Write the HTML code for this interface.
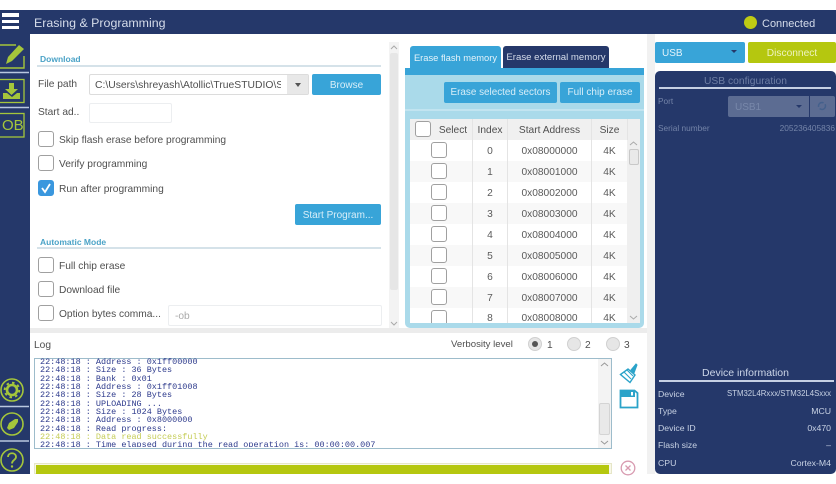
<!DOCTYPE html>
<html><head><meta charset="utf-8"><style>
html,body{margin:0;padding:0;background:#fff}
#r{position:relative;width:836px;height:484px;overflow:hidden;background:#fff;font-family:"Liberation Sans",sans-serif;color:#4f4f4f;font-size:10.2px}
#r div{position:absolute;box-sizing:border-box}
.t{white-space:nowrap;line-height:16px;height:16px;margin-top:1px}
.l{margin-top:2px}
.b{background:#38a4d8;color:#d8eef8;border-radius:2px;text-align:center;font-size:10px;margin-top:0}
.c{width:16px;height:16px;background:#fff;border:1px solid #a0a0a0;border-radius:3px}
.inp{background:#fff;border:1px solid #eceef0;border-radius:2px}
.hd{color:#4f4f4f;text-align:center;top:121px;font-size:10.2px}
.row{left:410px;width:217px;height:21px}
.cell{text-align:center;font-size:10.2px;color:#5a5a5a}
.d{color:#7484a8;font-size:8.3px;margin-top:0}
.w{color:#c8d2e4;font-size:8.7px;margin-top:0}
#log{left:40px;top:358px;font-family:"Liberation Mono",monospace;font-size:8.47px;line-height:8.33px;color:#2d3a8c;white-space:pre;height:89px;overflow:hidden;width:550px}
</style></head><body><div id="r">
<div style="left:0;top:10px;width:836px;height:24px;background:#25386a"></div>
<div style="left:0;top:10px;width:30px;height:464px;background:#25386a"></div>
<div style="left:2px;top:13px;width:17px;height:3.5px;background:#fff"></div>
<div style="left:2px;top:19.5px;width:17px;height:3.5px;background:#fff"></div>
<div style="left:2px;top:25.5px;width:17px;height:3.5px;background:#fff"></div>
<div class="t" style="left:34px;top:14px;font-size:12.4px;color:#d5dcea">Erasing &amp; Programming</div>
<div style="left:744px;top:16px;width:13px;height:13px;border-radius:50%;background:#bfcb14"></div>
<div class="t" style="left:762px;top:15px;font-size:11px;color:#d5dcea">Connected</div>

<svg style="position:absolute;left:0;top:40px" width="30" height="100" viewBox="0 0 30 100" fill="none">
<path d="M0 5H16M24 16V28H0" stroke="#a5c63b" stroke-width="1.4"/>
<path d="M6 24l2-7L19 5l5 4L12 21z" fill="#a5c63b"/>
<path d="M0 32.500H29M0 67.500H29" stroke="#b9c8e0" stroke-width="1.500"/>
<rect x="-2" y="39.500" width="26" height="23" stroke="#a5c63b" stroke-width="1.300"/>
<path d="M9 43h5v6h4l-6.500 6-6.500-6h4z" fill="#a5c63b"/>
<path d="M3 53h4l5 4 5-4h3v6H3z" fill="#a5c63b"/>
<rect x="-2" y="73.500" width="26" height="23.500" stroke="#a5c63b" stroke-width="1.300"/>
</svg>
<div class="t" style="left:2px;top:117px;font-size:15px;color:#a5c63b">OB</div>
<svg style="position:absolute;left:0;top:374px" width="30" height="100" viewBox="0 0 30 100" fill="none" stroke="#a5c63b">
<circle cx="12" cy="16" r="11" stroke-width="1.600"/>
<circle cx="12" cy="16" r="5" stroke-width="2.600"/>
<circle cx="12" cy="16" r="7.300" stroke-width="2" stroke-dasharray="2.500 3.200"/>
<path d="M0 32.500H29M0 67H29" stroke="#b9c8e0" stroke-width="1.500"/>
<circle cx="12" cy="50" r="11" stroke-width="1.600"/>
<path d="M7 54l2-5 6-4 3 0 0 3-4 6-5 2z" fill="#a5c63b" stroke="none"/>
<circle cx="12" cy="86" r="11" stroke-width="1.600"/>
<path d="M8 83c0-5 8-5 8 0 0 3-4 3-4 6.500" stroke-width="1.800"/>
<circle cx="12" cy="92.500" r="1.200" fill="#a5c63b" stroke="none"/>
</svg>

<div class="t" style="left:40px;top:50px;font-size:8.5px;font-weight:bold;color:#4ba3c7">Download</div>
<div style="left:37px;top:65px;width:344px;height:2px;background:#d5e2e9"></div>
<div class="t l" style="left:38px;top:75px">File path</div>
<div style="left:89px;top:74px;width:220px;height:21px;background:#fff;border:1px solid #dcdcdc;border-radius:2px"></div>
<div style="left:287px;top:75px;width:21px;height:19px;background:#e8e8e8"></div>
<div style="left:295px;top:83px;width:0;height:0;border-left:3.500px solid transparent;border-right:3.500px solid transparent;border-top:4px solid #555"></div>
<div class="t l" style="left:95px;top:76px;width:186px;overflow:hidden;font-size:10.35px">C:\Users\shreyash\Atollic\TrueSTUDIO\S</div>
<div class="b t" style="left:312px;top:74px;width:69px;height:21px;line-height:23px">Browse</div>
<div class="t l" style="left:38px;top:103px">Start ad..</div>
<div class="inp" style="left:89px;top:103px;width:83px;height:20px"></div>
<div class="c" style="left:38px;top:131px"></div><div class="t l" style="left:59px;top:131px">Skip flash erase before programming</div>
<div class="c" style="left:38px;top:155px"></div><div class="t l" style="left:59px;top:155px">Verify programming</div>
<div class="c" style="left:38px;top:180px;background:#3a97de;border-color:#3a97de"></div>
<svg style="position:absolute;left:38px;top:180px" width="16" height="16" fill="none"><path d="M4 8l3 4 5-8" stroke="#fff" stroke-width="1.800"/></svg>
<div class="t l" style="left:59px;top:180px">Run after programming</div>
<div class="b t" style="left:295px;top:204px;width:86px;height:21px;line-height:23px">Start Program...</div>
<div class="t" style="left:40px;top:233px;font-size:8.5px;font-weight:bold;color:#4ba3c7">Automatic Mode</div>
<div style="left:37px;top:247px;width:344px;height:2px;background:#d5e2e9"></div>
<div class="c" style="left:38px;top:257px"></div><div class="t l" style="left:59px;top:257px">Full chip erase</div>
<div class="c" style="left:38px;top:281px"></div><div class="t l" style="left:59px;top:281px">Download file</div>
<div class="c" style="left:38px;top:305px"></div><div class="t l" style="left:59px;top:305px">Option bytes comma...</div>
<div class="inp" style="left:168px;top:305px;width:214px;height:21px"></div>
<div class="t" style="left:175px;top:308px;color:#aaa">-ob</div>

<div style="left:389px;top:42px;width:10px;height:286px;background:#f3f3f3"></div>
<div style="left:390px;top:53px;width:8px;height:237px;background:#e6e6e6;border-radius:2px"></div>
<svg style="position:absolute;left:389px;top:42px" width="10" height="286" fill="none" stroke="#aaa"><path d="M2 7l3-3 3 3M2 280l3 3 3-3"/></svg>

<div style="left:30px;top:328px;width:617px;height:5px;background:#ececec"></div>
<div style="left:647px;top:34px;width:8px;height:440px;background:#f1f1f1"></div>

<div style="left:410px;top:46px;width:91px;height:24px;background:#38a4d8;border-radius:3px 3px 0 0"></div>
<div class="t" style="left:410px;top:49px;width:91px;text-align:center;color:#e4f3fa;font-size:9.35px">Erase flash memory</div>
<div style="left:503px;top:46px;width:106px;height:23px;background:#25386a;border-radius:3px 3px 0 0"></div>
<div class="t" style="left:503px;top:49px;width:106px;text-align:center;color:#d5dcea;font-size:9.6px">Erase external memory</div>
<div style="left:405px;top:68px;width:239px;height:260px;background:#aadaea;border-radius:0 0 5px 5px"></div>
<div style="left:405px;top:68px;width:239px;height:7px;background:#38a4d8"></div>
<div style="left:405px;top:109px;width:239px;height:2px;background:#c2e4f0"></div>
<div class="b t" style="left:444px;top:82px;width:113px;height:21px;line-height:22px;font-size:9.9px">Erase selected sectors</div>
<div class="b t" style="left:560px;top:82px;width:80px;height:21px;line-height:22px">Full chip erase</div>

<div style="left:410px;top:119px;width:217px;height:204px;background:#fff"></div>
<div style="left:410px;top:119px;width:217px;height:21px;background:#f0f0f0"></div>
<div style="left:627px;top:119px;width:13px;height:204px;background:#efefef"></div>
<div style="left:629px;top:149px;width:10px;height:16px;background:#e9e9e9;border:1px solid #c8c8c8;border-radius:2px"></div>
<svg style="position:absolute;left:627px;top:140px" width="13" height="183" fill="none" stroke="#aaa"><path d="M3 5l3.500-3 3.500 3M3 176l3.500 3 3.500-3"/></svg>
<div class="row" style="top:161px;background:#f8f8f8"></div>
<div class="row" style="top:203px;background:#f8f8f8"></div>
<div class="row" style="top:245px;background:#f8f8f8"></div>
<div class="row" style="top:287px;background:#f8f8f8"></div>
<div style="left:472px;top:119px;width:1px;height:204px;background:#e4e4e4"></div>
<div style="left:507px;top:119px;width:1px;height:204px;background:#e4e4e4"></div>
<div style="left:591px;top:119px;width:1px;height:204px;background:#e4e4e4"></div>
<div style="left:627px;top:119px;width:1px;height:21px;background:#e4e4e4"></div>
<div class="c" style="left:415px;top:121px"></div>
<div class="t l hd" style="left:433px;width:40px">Select</div>
<div class="t l hd" style="left:473px;width:34px">Index</div>
<div class="t l hd" style="left:508px;width:83px">Start Address</div>
<div class="t l hd" style="left:592px;width:35px">Size</div>

<div class="c" style="left:431px;top:142px"></div><div class="t l cell" style="left:473px;top:142px;width:34px">0</div><div class="t l cell" style="left:508px;top:142px;width:83px">0x08000000</div><div class="t l cell" style="left:592px;top:142px;width:35px">4K</div>
<div class="c" style="left:431px;top:163px"></div><div class="t l cell" style="left:473px;top:163px;width:34px">1</div><div class="t l cell" style="left:508px;top:163px;width:83px">0x08001000</div><div class="t l cell" style="left:592px;top:163px;width:35px">4K</div>
<div class="c" style="left:431px;top:184px"></div><div class="t l cell" style="left:473px;top:184px;width:34px">2</div><div class="t l cell" style="left:508px;top:184px;width:83px">0x08002000</div><div class="t l cell" style="left:592px;top:184px;width:35px">4K</div>
<div class="c" style="left:431px;top:205px"></div><div class="t l cell" style="left:473px;top:205px;width:34px">3</div><div class="t l cell" style="left:508px;top:205px;width:83px">0x08003000</div><div class="t l cell" style="left:592px;top:205px;width:35px">4K</div>
<div class="c" style="left:431px;top:226px"></div><div class="t l cell" style="left:473px;top:226px;width:34px">4</div><div class="t l cell" style="left:508px;top:226px;width:83px">0x08004000</div><div class="t l cell" style="left:592px;top:226px;width:35px">4K</div>
<div class="c" style="left:431px;top:247px"></div><div class="t l cell" style="left:473px;top:247px;width:34px">5</div><div class="t l cell" style="left:508px;top:247px;width:83px">0x08005000</div><div class="t l cell" style="left:592px;top:247px;width:35px">4K</div>
<div class="c" style="left:431px;top:268px"></div><div class="t l cell" style="left:473px;top:268px;width:34px">6</div><div class="t l cell" style="left:508px;top:268px;width:83px">0x08006000</div><div class="t l cell" style="left:592px;top:268px;width:35px">4K</div>
<div class="c" style="left:431px;top:289px"></div><div class="t l cell" style="left:473px;top:289px;width:34px">7</div><div class="t l cell" style="left:508px;top:289px;width:83px">0x08007000</div><div class="t l cell" style="left:592px;top:289px;width:35px">4K</div>
<div class="c" style="left:431px;top:310px;height:13px;border-bottom:0;border-radius:3px 3px 0 0"></div><div class="t l cell" style="left:473px;top:309px;width:34px">8</div><div class="t l cell" style="left:508px;top:309px;width:83px">0x08008000</div><div class="t l cell" style="left:592px;top:309px;width:35px">4K</div>

<div class="t l" style="left:34px;top:336px">Log</div>
<div class="t" style="left:451px;top:336px;font-size:9.6px">Verbosity level</div>
<div style="left:528px;top:337px;width:14px;height:14px;border-radius:50%;background:#e6e6e6;border:1px solid #d0d0d0"></div>
<div style="left:532px;top:341px;width:6px;height:6px;border-radius:50%;background:#555"></div>
<div class="t" style="left:547px;top:337px">1</div>
<div style="left:567px;top:337px;width:14px;height:14px;border-radius:50%;background:#e6e6e6;border:1px solid #d0d0d0"></div>
<div class="t" style="left:585px;top:337px">2</div>
<div style="left:606px;top:337px;width:14px;height:14px;border-radius:50%;background:#e6e6e6;border:1px solid #d0d0d0"></div>
<div class="t" style="left:624px;top:337px">3</div>

<div style="left:34px;top:358px;width:578px;height:91px;background:#fff;border:1px solid #9dbccb"></div>
<div id="log">22:48:18 : Address : 0x1ff00000
22:48:18 : Size : 36 Bytes
22:48:18 : Bank : 0x01
22:48:18 : Address : 0x1ff01008
22:48:18 : Size : 28 Bytes
22:48:18 : UPLOADING ...
22:48:18 : Size : 1024 Bytes
22:48:18 : Address : 0x8000000
22:48:18 : Read progress:
<span style="color:#c5cc55">22:48:18 : Data read successfully</span>
22:48:18 : Time elapsed during the read operation is: 00:00:00.007</div>
<div style="left:598px;top:359px;width:13px;height:89px;background:#f3f3f3"></div>
<div style="left:599px;top:403px;width:11px;height:32px;background:#e9e9e9;border:1px solid #d4d4d4;border-radius:2px"></div>
<svg style="position:absolute;left:598px;top:359px" width="13" height="89" fill="none" stroke="#999"><path d="M3 7l3.500-3 3.500 3M3 82l3.500 3 3.500-3"/></svg>

<svg style="position:absolute;left:618px;top:362px" width="22" height="48" viewBox="0 0 22 48" fill="none" stroke="#2aa3c9">
<path d="M2.500 12.500L10 7l7 6-5 7.500z" stroke-width="1.400"/>
<path d="M6 10l7 7M9 8l6 6" stroke-width="1.100"/>
<path d="M13 8l5-6 1 1-3 8z" fill="#2aa3c9" stroke-width="1"/>
<path d="M2.500 28.500h14l3 2.500v14.500h-17z" stroke-width="1.800"/>
<rect x="3" y="29" width="14" height="6" fill="#2aa3c9" stroke="none"/>
<rect x="13" y="30" width="2" height="3.500" fill="#fff" stroke="none"/>
</svg>

<div style="left:34px;top:463px;width:578px;height:11px;background:#f8f8e8;border:1px solid #e6e6c8"></div>
<div style="left:36px;top:465px;width:573px;height:9px;background:#b5c70f"></div>
<svg style="position:absolute;left:620px;top:460px" width="16" height="16" fill="none" stroke="#d89bb0" stroke-width="1.300"><circle cx="8" cy="8" r="6.800"/><path d="M5.500 5.500l5 5M10.500 5.500l-5 5"/></svg>

<div class="b t" style="left:655px;top:42px;width:90px;height:21px;line-height:24px;text-align:left;padding-left:7px;color:#e4f3fa">USB</div>
<div style="left:731px;top:50px;width:0;height:0;border-left:3px solid transparent;border-right:3px solid transparent;border-top:3.500px solid #25386a"></div>
<div class="t" style="left:748px;top:42px;width:88px;height:21px;line-height:24px;background:#b5c70f;color:#eef3c0;text-align:center;border-radius:2px;margin-top:0">Disconnect</div>
<div style="left:655px;top:71px;width:181px;height:403px;background:#25386a;border-radius:5px"></div>
<div class="t" style="left:655px;top:73px;width:181px;text-align:center;color:#6e7ea4;font-size:10.3px">USB configuration</div>
<div style="left:659px;top:87px;width:172px;height:1.500px;background:#c6d0e4"></div>
<div class="t d" style="left:658px;top:93px">Port</div>
<div style="left:728px;top:96px;width:81px;height:21px;background:#5c6c92;border-radius:2px 0 0 2px"></div>
<div style="left:810px;top:96px;width:25px;height:21px;background:#5c6c92;border-radius:0 2px 2px 0"></div>
<div class="t l" style="left:735px;top:98px;color:#7888aa;font-size:10px">USB1</div>
<div style="left:796px;top:105px;width:0;height:0;border-left:3px solid transparent;border-right:3px solid transparent;border-top:3.500px solid #25386a"></div>
<svg style="position:absolute;left:816px;top:100px" width="12" height="12" fill="none" stroke="#44608c" stroke-width="1.500"><circle cx="6" cy="6" r="3.500" stroke-dasharray="8 2"/></svg>
<div class="t d" style="left:658px;top:120px">Serial number</div>
<div class="t d" style="right:1px;top:120px">205236405836</div>
<div class="t" style="left:655px;top:364px;width:181px;text-align:center;color:#ccd6e8;font-size:10.5px">Device information</div>
<div style="left:659px;top:380px;width:175px;height:1.500px;background:#c6d0e4"></div>
<div class="t w" style="left:658px;top:386px">Device</div><div class="t w" style="right:5px;top:386px;font-size:7.8px">STM32L4Rxxx/STM32L4Sxxx</div>
<div class="t w" style="left:658px;top:403px">Type</div><div class="t w" style="right:5px;top:403px">MCU</div>
<div class="t w" style="left:658px;top:420px">Device ID</div><div class="t w" style="right:5px;top:420px">0x470</div>
<div class="t w" style="left:658px;top:437px">Flash size</div><div class="t w" style="right:5px;top:437px">–</div>
<div class="t w" style="left:658px;top:455px">CPU</div><div class="t w" style="right:5px;top:455px">Cortex-M4</div>
</div></body></html>
